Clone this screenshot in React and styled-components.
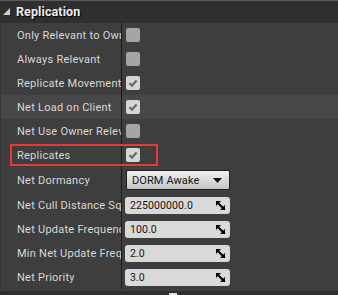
import React from "react";
import styled, { createGlobalStyle } from "styled-components";

const Global = createGlobalStyle`
  html, body { margin: 0; padding: 0; background: #3e3e3e; overflow: hidden; }
  * { box-sizing: border-box; }
`;

const Panel = styled.div`
  width: 338px;
  height: 295px;
  background: #3e3e3e;
  display: flex;
  flex-direction: column;
  font-family: Roboto, "Liberation Sans", sans-serif;
  overflow: hidden;
`;

const Header = styled.div`
  height: 23px;
  flex: none;
  background: #2f2f2f;
  border-top: 1px solid #5a5a5a;
  display: flex;
  align-items: center;
  gap: 5px;
  padding-left: 3px;
`;

const HeaderTitle = styled.span`
  color: #ececec;
  font-weight: 700;
  font-size: 12.5px;
  letter-spacing: 0.1px;
  text-shadow: 1px 1px 1px #000;
  line-height: 1;
`;

const Body = styled.div`
  display: flex;
  flex-direction: column;
  border-left: 1px solid #363636;
`;

const Row = styled.div`
  position: relative;
  height: ${(p) => p.$h || 24}px;
  display: grid;
  grid-template-columns: 121px 1fr;
  background: ${(p) => (p.$hover ? "#474747" : "transparent")};
`;

const Label = styled.div`
  display: flex;
  align-items: center;
  padding-left: 16px;
  border-right: 1px solid #1c1c1c;
  color: #d8d8d8;
  font-size: 11px;
  letter-spacing: 0.25px;
  white-space: nowrap;
  overflow: hidden;
`;

const Value = styled.div`
  display: flex;
  align-items: center;
  padding-left: ${(p) => p.$pad ?? 4}px;
`;

const Box = styled.div`
  width: 14px;
  height: 14px;
  border-radius: 2px;
  background: ${(p) => (p.$checked ? "#d6d6d6" : "#a5a5a5")};
  display: flex;
  align-items: center;
  justify-content: center;
`;

const Combo = styled.div`
  width: 104px;
  height: 20px;
  border-radius: 2px;
  border: 1px solid #222;
  background: linear-gradient(#f0f0f0, #c4c4c4);
  display: flex;
  align-items: center;
  justify-content: space-between;
  padding: 0 7px 0 5px;
  color: #151515;
  font-size: 11px;
  letter-spacing: 0.1px;
`;

const NumBox = styled.div`
  width: 105px;
  height: 17px;
  border-radius: 3px;
  background: #d9d9d9;
  display: flex;
  align-items: center;
  justify-content: space-between;
  padding: 0 5px 0 5px;
  color: #141414;
  font-size: 10.5px;
  letter-spacing: 0.1px;
`;

const Highlight = styled.div`
  position: absolute;
  left: 9px;
  top: 1px;
  width: 148px;
  height: 22px;
  border: 2px solid #e33a3a;
  pointer-events: none;
`;

const Footer = styled.div`
  position: relative;
  flex: 1;
  margin-top: 2px;
  background: #2f2f2f;
`;

const Nub = styled.div`
  position: absolute;
  left: 169px;
  top: 2px;
  width: 8px;
  height: 4px;
  background: #e0e0e0;
`;

const Check = () => (
  <svg width="10" height="10" viewBox="0 0 10 10">
    <path d="M1.5 5.2 L4 7.6 L8.6 2.4" fill="none" stroke="#6a6a6a" strokeWidth="2.2" strokeLinejoin="miter" />
  </svg>
);

const Checkbox = ({ checked }) => <Box $checked={checked}>{checked && <Check />}</Box>;

const Triangle = () => (
  <svg width="8" height="8" viewBox="0 0 8 8">
    <polygon points="7,0 7,7 0,7" fill="#d0d0d0" />
  </svg>
);

const DownArrow = () => (
  <svg width="9" height="5" viewBox="0 0 9 5">
    <polygon points="0,0 9,0 4.5,5" fill="#111" />
  </svg>
);

const SpinIcon = () => (
  <svg width="9" height="9" viewBox="0 0 9 9">
    <polygon points="0,0 5,0 0,5" fill="#000" />
    <polygon points="9,9 4,9 9,4" fill="#000" />
    <path d="M1 1 L8 8" stroke="#000" strokeWidth="2" />
  </svg>
);

const rows = [
  { label: "Only Relevant to Owner", type: "check", checked: false },
  { label: "Always Relevant", type: "check", checked: false },
  { label: "Replicate Movement", type: "check", checked: true },
  { label: "Net Load on Client", type: "check", checked: true, hover: true },
  { label: "Net Use Owner Relevancy", type: "check", checked: false },
  { label: "Replicates", type: "check", checked: true, mark: true },
  { label: "Net Dormancy", type: "combo", value: "DORM Awake", h: 26 },
  { label: "Net Cull Distance Squared", type: "num", value: "225000000.0" },
  { label: "Net Update Frequency", type: "num", value: "100.0" },
  { label: "Min Net Update Frequency", type: "num", value: "2.0" },
  { label: "Net Priority", type: "num", value: "3.0" },
];

export default function App() {
  return (
    <Panel>
      <Global />
      <Header>
        <Triangle />
        <HeaderTitle>Replication</HeaderTitle>
      </Header>
      <Body>
        {rows.map((r) => (
          <Row key={r.label} $h={r.h} $hover={r.hover}>
            <Label>{r.label}</Label>
            <Value $pad={r.type === "num" ? 3 : 4}>
              {r.type === "check" && <Checkbox checked={r.checked} />}
              {r.type === "combo" && (
                <Combo>
                  <span>{r.value}</span>
                  <DownArrow />
                </Combo>
              )}
              {r.type === "num" && (
                <NumBox>
                  <span>{r.value}</span>
                  <SpinIcon />
                </NumBox>
              )}
            </Value>
            {r.mark && <Highlight />}
          </Row>
        ))}
      </Body>
      <Footer>
        <Nub />
      </Footer>
    </Panel>
  );
}
